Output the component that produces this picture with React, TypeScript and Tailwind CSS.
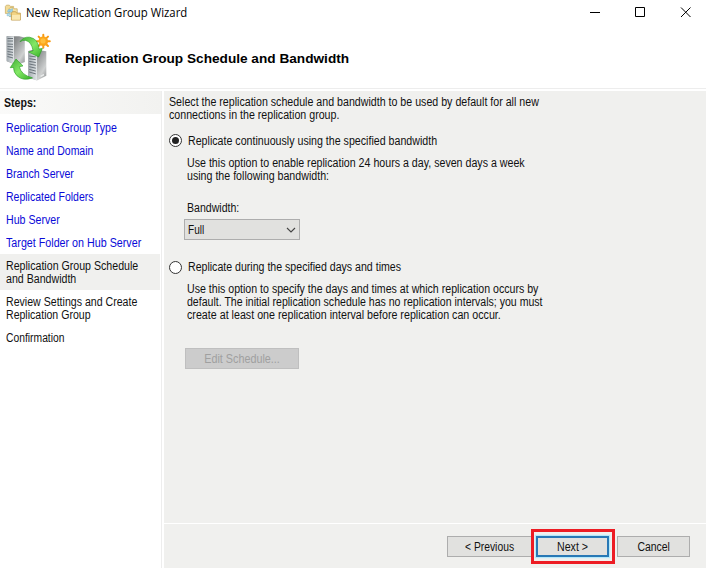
import React from "react";

const FolderIcon = () => (
  <svg width="18" height="18" viewBox="0 0 18 18" className="shrink-0">
    <path d="M1.4 2.4l1-1.2h3l1 1.2h3.2v7H1.4z" fill="#f3dc98" stroke="#cdb068" strokeWidth=".8" />
    <path d="M5 4.8l1-1.2h3l1 1.2h3.2v7.6H5z" fill="#f6e3a6" stroke="#cdb068" strokeWidth=".8" />
    <path d="M3.4 7.5Q4 4.5 7 5.5l1.5-1 .3 4-3.4-.6 1-1Q5 6.5 4.8 8.2z" fill="#9ed3ea" stroke="#79b4d0" strokeWidth=".5" />
    <path d="M3.2 9.5l3-.6-.6 1.3q1 1.3 2.4.7v1.7q-2.3.7-3.6-1.2l-1.2.6z" fill="#b9e2f2" stroke="#79b4d0" strokeWidth=".5" />
    <path d="M7.4 9.2l1-1.5h3.2l1 1.4h3.8v7H7.4z" fill="#f2d484" stroke="#c39d4c" strokeWidth=".8" />
    <path d="M8 11h8v4.7H8z" fill="#fae8b0" />
  </svg>
);

const WizardLogo = () => (
  <svg width="48" height="50" viewBox="0 0 48 50" className="shrink-0">
    <defs>
      <linearGradient id="side" x1="0" y1="0" x2="1" y2="1">
        <stop offset="0" stopColor="#6d7071" />
        <stop offset=".35" stopColor="#8d9091" />
        <stop offset=".75" stopColor="#cfd1d1" />
        <stop offset="1" stopColor="#8c8f90" />
      </linearGradient>
      <linearGradient id="front" x1="0" x2="1">
        <stop offset="0" stopColor="#a4acb2" />
        <stop offset="1" stopColor="#e2e6e8" />
      </linearGradient>
      <linearGradient id="arrow" x1="0" y1="0" x2="1" y2="1">
        <stop offset="0" stopColor="#3fae35" />
        <stop offset=".5" stopColor="#84e866" />
        <stop offset="1" stopColor="#35b026" />
      </linearGradient>
    </defs>
    <path d="M1.7 3.3h12.5l5.6 1.2v24.5l-8 3.2-10.1-4z" fill="url(#side)" />
    <path d="M1.7 3.3H9v27.800l-7.300-3z" fill="url(#front)" />
    <path d="M2.500 5.500H8M2.500 8H8M2.500 11l5.500.3M2.500 13.500l5.500.4M2.500 16l5.500.7M2.500 18.500l5.500.9M2.500 21l5.500 1.200M2.500 23.500l5.500 1.500" stroke="#6b747b" strokeWidth="1" />
    <path d="M23.300 18l7-1.500 11 1.700v24.600l-9.300 4.700-8.700-3z" fill="url(#side)" />
    <path d="M23.300 18l8.700 1.500v28l-8.700-3z" fill="url(#front)" />
    <path d="M24.200 23l6.600.9M24.200 25.700l6.600 1M24.200 28.400l6.600 1.100M24.200 31l6.600 1.300M24.200 33.700l6.600 1.500M24.200 36.400l6.600 1.700M24.200 39l6.600 1.900" stroke="#6b747b" strokeWidth="1" />
    <path d="M35.500 42.500l3.500-1.800v1.800l-3.500 1.800z" fill="#e9ebeb" />
    <g stroke="#f79a12" strokeWidth="2" strokeLinecap="round">
      <path d="M38.300 1.800v13M31.800 8.300h13M33.600 3.600l9.400 9.400M43 3.600l-9.400 9.400" />
    </g>
    <circle cx="38.300" cy="8.300" r="4.800" fill="#fba51a" />
    <circle cx="38" cy="7.900" r="2.600" fill="#ffbf3c" />
    <path d="M15 8.700Q18.500 3.600 24.500 4.200Q33.500 5.800 34 16l3.400-.6-3.700 8.600-9.900-5 4.300-1.200Q26.500 8.600 20.500 7.400 17.500 7 15 8.700z" fill="url(#arrow)" stroke="#279a22" strokeWidth=".6" />
    <path d="M11 26l7 6.900-3.600.8q1.300 8 13.100 11.200-9.500 3.600-15.500-2.100-3.500-3.600-3.500-8.400l-3.300.3z" fill="url(#arrow)" stroke="#279a22" strokeWidth=".6" />
  </svg>
);

/* Text drawn in the narrow dialog face: `fit` carries the horizontal condensing. */
const T = ({ fit = "scale-x-[.887]", center = false, children }: { fit?: string; center?: boolean; children: React.ReactNode }) => (
  <span className={`inline-block ${center ? "origin-center" : "origin-left"} ${fit}`}>{children}</span>
);

const Step = ({ lines, state = "todo" }: { lines: [string, string][]; state?: "done" | "current" | "todo" }) => (
  <li className={`w-[160px] pt-[6px] pb-[4px] ${state === "done" ? "pl-[6px]" : "pl-[5.5px]"} ${state === "current" ? "bg-[#f0f0ee]" : ""} ${state === "done" ? "text-[#0a0ad8]" : "text-[#111]"}`}>
    {lines.map(([text, fit]) => (
      <div key={text} className="h-[13px]"><T fit={fit}>{text}</T></div>
    ))}
  </li>
);

export default function App() {
  return (
    <div className="flex h-[568px] w-[706px] flex-col overflow-hidden bg-white font-['Liberation_Sans',Arial,sans-serif] text-[12px] leading-[13px] whitespace-nowrap text-[#111]">
      <header className="flex h-[26px] shrink-0 items-center pl-[4px]">
        <FolderIcon />
        <h1 className="ml-1 grow pb-[2px] font-['Open_Sans','Noto_Sans',sans-serif] text-[12px] text-black"><T fit="scale-x-[.946]">New Replication Group Wizard</T></h1>
        <svg width="116" height="26" viewBox="0 0 116 26" fill="none" stroke="#000" className="shrink-0">
          <path d="M0 12.5h10M45.5 7.5h9v9h-9zM91 7.5l9.5 9.5M100.5 7.5L91 17" />
        </svg>
      </header>
      <div className="flex h-[63px] shrink-0 border-b border-[#ededed] pt-[7px] pl-[5px]">
        <WizardLogo />
        <h2 className="mt-[19px] ml-3 text-[13.5px] font-bold text-black"><T fit="scale-x-[1.01]">Replication Group Schedule and Bandwidth</T></h2>
      </div>
      <div className="mt-[2px] flex min-h-0 grow">
        <aside className="mr-[2px] w-[162px] shrink-0 border-r border-[#ededed]">
          <h3 className="h-[23px] bg-linear-to-r from-[#fafaf9] to-[#f2f2f0] pt-[6px] pl-[4px] font-bold"><T fit="scale-x-[.88]">Steps:</T></h3>
          <ul className="mt-[2px]">
            <Step state="done" lines={[["Replication Group Type", "scale-x-[.885]"]]} />
            <Step state="done" lines={[["Name and Domain", "scale-x-[.873]"]]} />
            <Step state="done" lines={[["Branch Server", "scale-x-[.885]"]]} />
            <Step state="done" lines={[["Replicated Folders", "scale-x-[.875]"]]} />
            <Step state="done" lines={[["Hub Server", "scale-x-[.885]"]]} />
            <Step state="done" lines={[["Target Folder on Hub Server", "scale-x-[.893]"]]} />
            <Step state="current" lines={[["Replication Group Schedule", "scale-x-[.885]"], ["and Bandwidth", "scale-x-[.885]"]]} />
            <Step lines={[["Review Settings and Create", "scale-x-[.883]"], ["Replication Group", "scale-x-[.88]"]]} />
            <Step lines={[["Confirmation", "scale-x-[.86]"]]} />
          </ul>
        </aside>
        <main className="flex grow flex-col bg-[#f0f0ee]">
          <section className="h-[432px] pt-[5px] pl-[5px]">
            <p><T>Select the replication schedule and bandwidth to be used by default for all new</T></p>
            <p><T>connections in the replication group.</T></p>
            <label className="mt-[12px] flex h-[13px] items-center">
              <span className="flex size-[13px] items-center justify-center rounded-full border border-[#333] bg-white"><span className="size-[7px] rounded-full bg-[#222]" /></span>
              <span className="ml-[6px] pt-[1px]"><T>Replicate continuously using the specified bandwidth</T></span>
            </label>
            <div className="mt-[10px] pl-[18px]">
              <p><T>Use this option to enable replication 24 hours a day, seven days a week</T></p>
              <p><T>using the following bandwidth:</T></p>
              <p className="mt-[19px]"><T fit="scale-x-[.88]">Bandwidth:</T></p>
            </div>
            <button className="mt-[4px] ml-[15px] flex h-[21px] w-[116px] items-center justify-between border border-[#adadad] bg-[#e1e1df] pt-[1px] pr-[3px] pl-[3px]">
              <T fit="scale-x-[.84]">Full</T>
              <svg width="10" height="6" viewBox="0 0 10 6" fill="none" stroke="#444" strokeWidth="1.1"><path d="M1 1l4 4 4-4" /></svg>
            </button>
            <label className="mt-[20px] flex h-[14px] items-center">
              <span className="size-[13px] rounded-full border border-[#333] bg-white" />
              <span className="ml-[6px]"><T fit="scale-x-[.882]">Replicate during the specified days and times</T></span>
            </label>
            <div className="mt-[9px] pl-[18px]">
              <p><T fit="scale-x-[.884]">Use this option to specify the days and times at which replication occurs by</T></p>
              <p><T fit="scale-x-[.88]">default. The initial replication schedule has no replication intervals; you must</T></p>
              <p><T fit="scale-x-[.891]">create at least one replication interval before replication can occur.</T></p>
            </div>
            <button disabled className="mt-[26px] ml-[16px] h-[21px] w-[114px] border border-[#bfbfbf] bg-[#ccc] pt-[1px] text-[#a0a0a0]"><T center fit="scale-x-[.9]">Edit Schedule...</T></button>
          </section>
          <footer className="flex grow items-start justify-end border-t border-white pt-[5px] pr-[16px]">
            <button className="mt-[7px] h-[21px] w-[84px] border border-r-0 border-[#adadad] bg-[#e1e1df] pt-[1px]"><T center fit="scale-x-[.86]">&lt; Previous</T></button>
            <div className="h-[35px] w-[84px] border-3 border-[#ed1c24] p-[2px] pt-[4px]">
              <button className="h-[21px] w-[73px] border-2 border-[#2878b5] bg-[#e1e1df] pt-[1px] shadow-[0_0_1px_1px_#b5e8fa]"><T center>Next &gt;</T></button>
            </div>
            <button className="mt-[7px] ml-[2px] h-[21px] w-[73px] border border-[#adadad] bg-[#e1e1df] pt-[1px]"><T center fit="scale-x-[.87]">Cancel</T></button>
          </footer>
        </main>
      </div>
    </div>
  );
}
